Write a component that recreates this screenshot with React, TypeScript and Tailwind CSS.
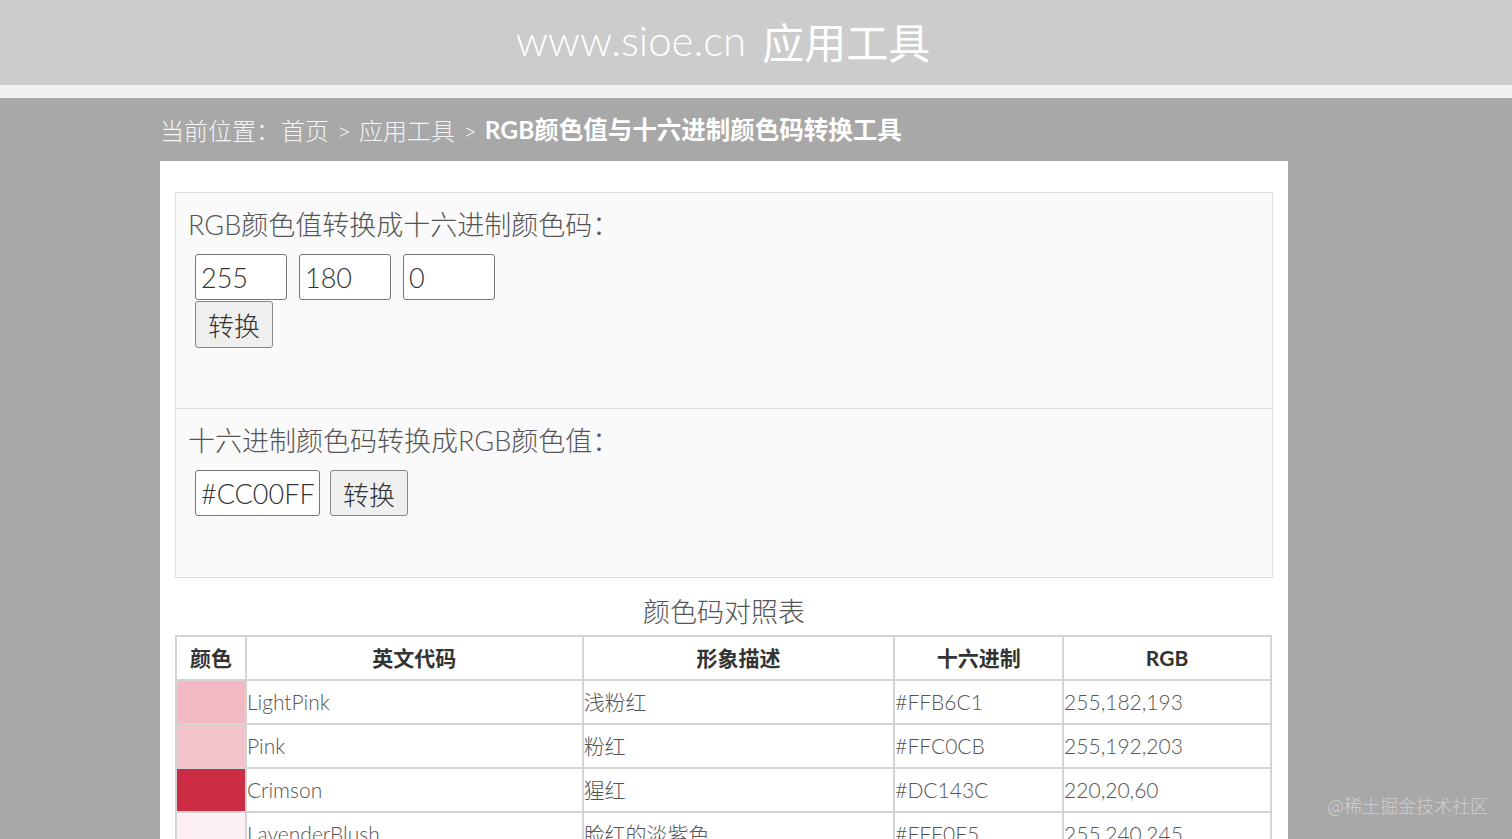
const rows = [
  { color: "#F3B9C4", name: "LightPink", desc: "浅粉红", hex: "#FFB6C1", rgb: "255,182,193" },
  { color: "#F4C4CD", name: "Pink", desc: "粉红", hex: "#FFC0CB", rgb: "255,192,203" },
  { color: "#CC2D45", name: "Crimson", desc: "猩红", hex: "#DC143C", rgb: "220,20,60" },
  { color: "#FCF0F4", name: "LavenderBlush", desc: "脸红的淡紫色", hex: "#FFF0F5", rgb: "255,240,245" },
  { color: "#D67394", name: "PaleVioletRed", desc: "苍白的紫罗兰红色", hex: "#DB7093", rgb: "219,112,147" },
];

const font = "font-['Lato','Noto_Sans_CJK_SC',sans-serif]";

export default function App() {
  return (
    <div className={`bg-[#a8a8a8] ${font} font-light overflow-hidden h-[839px] relative`}>
      <header className="h-[85px] bg-[#cccccc] flex items-center justify-center text-white pb-1 pr-[66px]">
        <span className="font-light text-[42px]">www.sioe.cn</span>
        <span className="ml-4 font-normal text-[42px] font-['Noto_Sans_CJK_SC',sans-serif]">应用工具</span>
      </header>
      <div className="h-[13px] bg-[#efefef]" />

      <div className="w-[1128px] ml-[160px]">
        <div className="h-[63px] flex items-center text-[24px] text-[#f4f4f4] pt-[2px]">
          <span>当前位置：</span>
          <span className="ml-[1px]">首页</span>
          <span className="mx-[8px]">&gt;</span>
          <span>应用工具</span>
          <span className="mx-[8px]">&gt;</span>
          <span className="font-bold text-white text-[24.5px]">RGB颜色值与十六进制颜色码转换工具</span>
        </div>

        <main className="bg-white px-[15px] pt-[31px] pb-10">
          <div className="border border-[#dddddd] bg-[#fafafa]">
            <section className="h-[216px] px-3 pt-[14px] border-b border-[#dddddd]">
              <div className="text-[27px] leading-[36px] text-[#555]">RGB颜色值转换成十六进制颜色码：</div>
              <div className="flex gap-[12px] mt-[11px] ml-[7px]">
                {["255", "180", "0"].map((v) => (
                  <input
                    key={v}
                    defaultValue={v}
                    className="w-[92px] h-[46px] border border-[#777] rounded-[3px] bg-white text-[27px] text-[#333] px-[5px] font-['Lato',sans-serif] font-light"
                  />
                ))}
              </div>
              <button className="ml-[7px] mt-[1px] w-[78px] h-[47px] border border-[#888] rounded-[3px] bg-[#efefef] text-[26px] text-[#333] font-['Noto_Sans_CJK_SC',sans-serif] font-light">
                转换
              </button>
            </section>
            <section className="h-[168px] px-3 pt-[14px]">
              <div className="text-[27px] leading-[36px] text-[#555]">十六进制颜色码转换成RGB颜色值：</div>
              <div className="flex gap-[10px] mt-[11px] ml-[7px]">
                <input
                  defaultValue="#CC00FF"
                  className="w-[125px] h-[46px] border border-[#777] rounded-[3px] bg-white text-[27px] text-[#333] px-[5px] font-['Lato',sans-serif] font-light"
                />
                <button className="w-[78px] h-[46px] border border-[#888] rounded-[3px] bg-[#efefef] text-[26px] text-[#333] font-['Noto_Sans_CJK_SC',sans-serif] font-light">
                  转换
                </button>
              </div>
            </section>
          </div>

          <div className="text-center text-[27px] leading-[36px] text-[#555] mt-[16px] mb-[5px]">颜色码对照表</div>

          <table className="w-[1097px] border-collapse text-[21px]">
            <colgroup>
              <col className="w-[70px]" />
              <col className="w-[337px]" />
              <col className="w-[312px]" />
              <col className="w-[169px]" />
              <col className="w-[208px]" />
            </colgroup>
            <thead>
              <tr className="h-[44px]">
                {["颜色", "英文代码", "形象描述", "十六进制", "RGB"].map((h) => (
                  <th key={h} className="border-2 border-[#d4d4d4] font-bold text-[#333] text-center">
                    {h}
                  </th>
                ))}
              </tr>
            </thead>
            <tbody>
              {rows.map((r) => (
                <tr key={r.name} className="h-[44px] text-[#555]">
                  <td className="border-2 border-[#d4d4d4] p-0">
                    <div className="h-[42px] w-full" style={{ backgroundColor: r.color }} />
                  </td>
                  <td className="border-2 border-[#d4d4d4] p-0">{r.name}</td>
                  <td className="border-2 border-[#d4d4d4] p-0">{r.desc}</td>
                  <td className="border-2 border-[#d4d4d4] p-0">{r.hex}</td>
                  <td className="border-2 border-[#d4d4d4] p-0">{r.rgb}</td>
                </tr>
              ))}
            </tbody>
          </table>
        </main>
      </div>

      <div className="absolute right-[24px] top-[792px] text-[18px] text-[#cfcfcf] font-['Noto_Sans_CJK_SC',sans-serif]">
        @稀土掘金技术社区
      </div>
    </div>
  );
}
